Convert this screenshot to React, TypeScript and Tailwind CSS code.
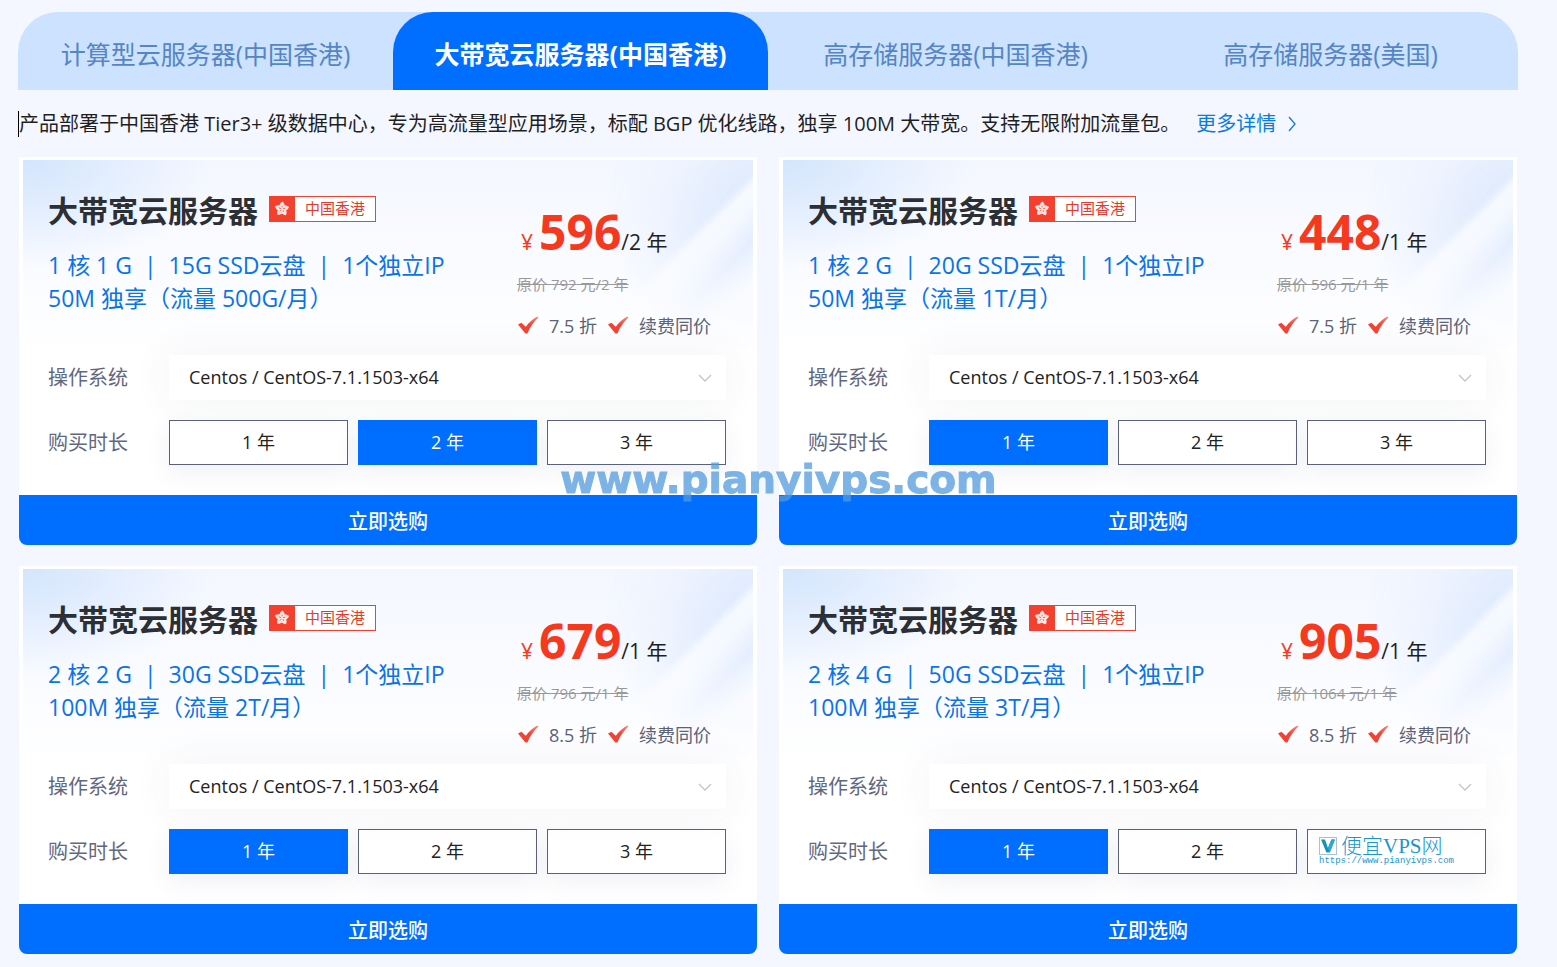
import { useState } from "react";
import clsx from "clsx";

const tabs = [
  "计算型云服务器(中国香港)",
  "大带宽云服务器(中国香港)",
  "高存储服务器(中国香港)",
  "高存储服务器(美国)",
];

const plans = [
  {
    id: "p1",
    specs: ["1 核 1 G", "15G SSD云盘", "1个独立IP"],
    traffic: "50M 独享（流量 500G/月）",
    price: 596,
    original: 792,
    years: 2,
    discount: "7.5 折",
  },
  {
    id: "p2",
    specs: ["1 核 2 G", "20G SSD云盘", "1个独立IP"],
    traffic: "50M 独享（流量 1T/月）",
    price: 448,
    original: 596,
    years: 1,
    discount: "7.5 折",
  },
  {
    id: "p3",
    specs: ["2 核 2 G", "30G SSD云盘", "1个独立IP"],
    traffic: "100M 独享（流量 2T/月）",
    price: 679,
    original: 796,
    years: 1,
    discount: "8.5 折",
  },
  {
    id: "p4",
    specs: ["2 核 4 G", "50G SSD云盘", "1个独立IP"],
    traffic: "100M 独享（流量 3T/月）",
    price: 905,
    original: 1064,
    years: 1,
    discount: "8.5 折",
    branded: true,
  },
];

function Flower() {
  return (
    <svg viewBox="0 0 25 24" className="h-6 w-[25px] shrink-0 bg-[#f4402f]">
      {[0, 72, 144, 216, 288].map((angle) => (
        <g key={angle} transform={`rotate(${angle} 12 12)`}>
          <path d="M12 13 L9.4 9.4 C9.4 7.4 10.6 5.6 12.4 4.6 C14 6 14.9 7.8 14.6 9.4 Z" fill="#ffe6e2" />
          <path d="M12 11 L12.2 8.6" stroke="#f4604f" strokeWidth="0.9" />
        </g>
      ))}
    </svg>
  );
}

function Tick() {
  return (
    <svg viewBox="0 0 22 20" className="h-5 w-[22px] shrink-0">
      <defs>
        <linearGradient id="tick" x1="0" y1="1" x2="1" y2="0">
          <stop offset="0" stopColor="#f5402f" />
          <stop offset="0.55" stopColor="#f0473a" />
          <stop offset="1" stopColor="#f98a80" />
        </linearGradient>
      </defs>
      <path d="M1 8.6 L4.4 6.8 L8.8 10.8 C12 6.6 16.4 2.6 20.6 0.6 L21.4 1.6 C17 5.6 13.4 10.8 10.4 17.4 L8.4 17.6 Z" fill="url(#tick)" />
    </svg>
  );
}

function BrandMark() {
  return (
    <span className="flex flex-col items-start pl-[11px] text-[#1a95cf]">
      <span className="flex items-center gap-1">
        <svg viewBox="0 0 18 18" className="size-[18px]">
          <rect x="0.5" y="0.5" width="17" height="17" fill="#fff" stroke="#a9c3d3" />
          <path d="M2 2.5 H6 L9 11 L12.4 2.5 H16 L10.8 15.5 H7.4Z" fill="#1793b8" />
          <path d="M9 11 L12.4 2.5 H16 L10.8 15.5Z" fill="#2ba8d8" />
        </svg>
        <span className="font-['Liberation_Serif','Noto_Sans_CJK_SC',serif] text-[21px] leading-[22px] font-light">
          便宜VPS网
        </span>
      </span>
      <span className="font-['Liberation_Mono',monospace] text-[9px] leading-[9px]">https://www.pianyivps.com</span>
    </span>
  );
}

function PlanCard({ plan }: { plan: (typeof plans)[number] }) {
  const [years, setYears] = useState(plan.years);

  return (
    <article className="overflow-hidden rounded-b-lg bg-white">
      <div className="relative isolate border-x-4 border-t-[3px] border-white bg-[radial-gradient(ellipse_190px_110px_at_0_0,#d3e5fd,transparent),linear-gradient(180deg,#f4f7ff,#ffffff_58%)] pr-[27px] pb-[30px] pl-[25px]">
        <div className="absolute top-0 right-0 -z-10 h-[200px] w-[150px] bg-[linear-gradient(135deg,#eaf1fe_10%,#dbe8fd_46%,#f5f9ff_50%,#f3f7ff_56%,#dfeafe_66%,#f5f9ff_78%)] mask-[radial-gradient(ellipse_150px_150px_at_100%_25%,black,transparent)]" />
        <div className="flex h-[195px] justify-between">
          <div className="pt-7">
            <div className="flex items-center gap-[11px]">
              <h2 className="text-[30px] leading-[45px] font-bold text-[#2c2f33]">大带宽云服务器</h2>
              <span className="mb-1 flex h-[26px] items-center border border-[#f4402f] bg-white text-[15px] text-[#e23b2c]">
                <Flower />
                <span className="px-[10px]">中国香港</span>
              </span>
            </div>
            <p className="mt-4 text-[23px] leading-[33px] whitespace-nowrap text-[#0a73e8]">
              {plan.specs.map((spec, i) => (
                <span key={spec}>
                  {i > 0 && <span className="mx-3">|</span>}
                  {spec}
                </span>
              ))}
              <br />
              {plan.traffic}
            </p>
          </div>

          <div className="w-[209px] pt-[42px] whitespace-nowrap">
            <div className="flex h-[60px] items-baseline pl-1 text-[21px] leading-[60px] text-[#1f1f1f]">
              <span className="mr-[6px] text-[#f5391f]">¥</span>
              <span className="text-[48px] font-bold text-[#f5391f]">{plan.price}</span>
              <span>/{plan.years} 年</span>
            </div>
            <p className="mt-[11px] text-[15px] leading-[22px] text-[#999999] line-through">
              原价 {plan.original} 元/{plan.years} 年
            </p>
            <div className="mt-[17px] flex items-center text-lg leading-7 text-[#5b6378]">
              <Tick />
              <span className="mr-[10px] ml-[10px]">{plan.discount}</span>
              <Tick />
              <span className="ml-[10px]">续费同价</span>
            </div>
          </div>
        </div>

        <div className="flex items-center">
          <label htmlFor={`${plan.id}-os`} className="w-[121px] text-xl text-[#5f6880]">
            操作系统
          </label>
          <div className="relative flex-1">
            <select
              id={`${plan.id}-os`}
              className="h-[45px] w-full appearance-none bg-white px-5 pb-[2px] text-lg text-[#222222] shadow-[0_0_40px_rgba(60,70,100,0.07)]"
            >
              <option>Centos / CentOS-7.1.1503-x64</option>
            </select>
            <svg viewBox="0 0 14 8" className="pointer-events-none absolute top-[19px] right-[14px] h-2 w-[14px]">
              <path d="M1 1 L7 7 L13 1" fill="none" stroke="#c0c4cc" strokeWidth="1.3" />
            </svg>
          </div>
        </div>

        <div className="mt-5 flex items-center">
          <span className="w-[121px] text-xl text-[#5f6880]">购买时长</span>
          <div className="grid flex-1 grid-cols-3 gap-[10px]">
            {[1, 2, 3].map((y) => (
              <button
                key={y}
                type="button"
                onClick={() => setYears(y)}
                className={clsx(
                  "h-[45px] border pb-[2px] text-lg shadow-[0_8px_24px_rgba(60,80,140,0.08)]",
                  years === y
                    ? "border-[#006eff] bg-[#006eff] text-white"
                    : "border-[#5a627a] bg-white text-[#222222]"
                )}
              >
                {plan.branded && y === 3 ? <BrandMark /> : `${y} 年`}
              </button>
            ))}
          </div>
        </div>
      </div>
      <button type="button" className="h-[50px] w-full bg-[#006eff] pt-1 text-xl font-medium text-white">
        立即选购
      </button>
    </article>
  );
}

export default function App() {
  const [active, setActive] = useState(1);

  return (
    <main className="relative min-h-screen bg-[#f4f7ff] pt-3 pr-[39px] pb-3 pl-[18px] font-['Open_Sans','Noto_Sans_CJK_SC',sans-serif]">
      <nav className="grid grid-cols-4 overflow-hidden rounded-t-[40px] bg-[#cce2fe]">
        {tabs.map((tab, i) => (
          <button
            key={tab}
            type="button"
            onClick={() => setActive(i)}
            className={clsx(
              "h-[78px] pt-2 text-[25px]",
              i === active ? "rounded-t-[40px] bg-[#006eff] font-bold text-white" : "text-[#5585c4]"
            )}
          >
            {tab}
          </button>
        ))}
      </nav>

      <p className="my-[18px] flex items-center text-xl leading-[31px] text-[#1f1f1f]">
        <span className="h-[26px] w-px bg-black" />
        产品部署于中国香港 Tier3+ 级数据中心，专为高流量型应用场景，标配 BGP 优化线路，独享 100M
        大带宽。支持无限附加流量包。
        <a href="#more" className="ml-4 flex items-center gap-3 text-[#0a7be0]">
          更多详情
          <svg viewBox="0 0 8 16" className="h-4 w-2">
            <path d="M1 1 L7 8 L1 15" fill="none" stroke="currentColor" strokeWidth="1.3" />
          </svg>
        </a>
      </p>

      <div className="grid grid-cols-2 gap-x-[22px] gap-y-[21px] px-px">
        {plans.map((plan) => (
          <PlanCard key={plan.id} plan={plan} />
        ))}
      </div>

      <div className="pointer-events-none absolute inset-x-0 top-[457px] text-center font-['DejaVu_Sans',sans-serif] text-[39px] leading-[46px] font-bold text-[#529bde] opacity-75 [-webkit-text-stroke:1px_#529bde]">
        www.pianyivps.com
      </div>
    </main>
  );
}
